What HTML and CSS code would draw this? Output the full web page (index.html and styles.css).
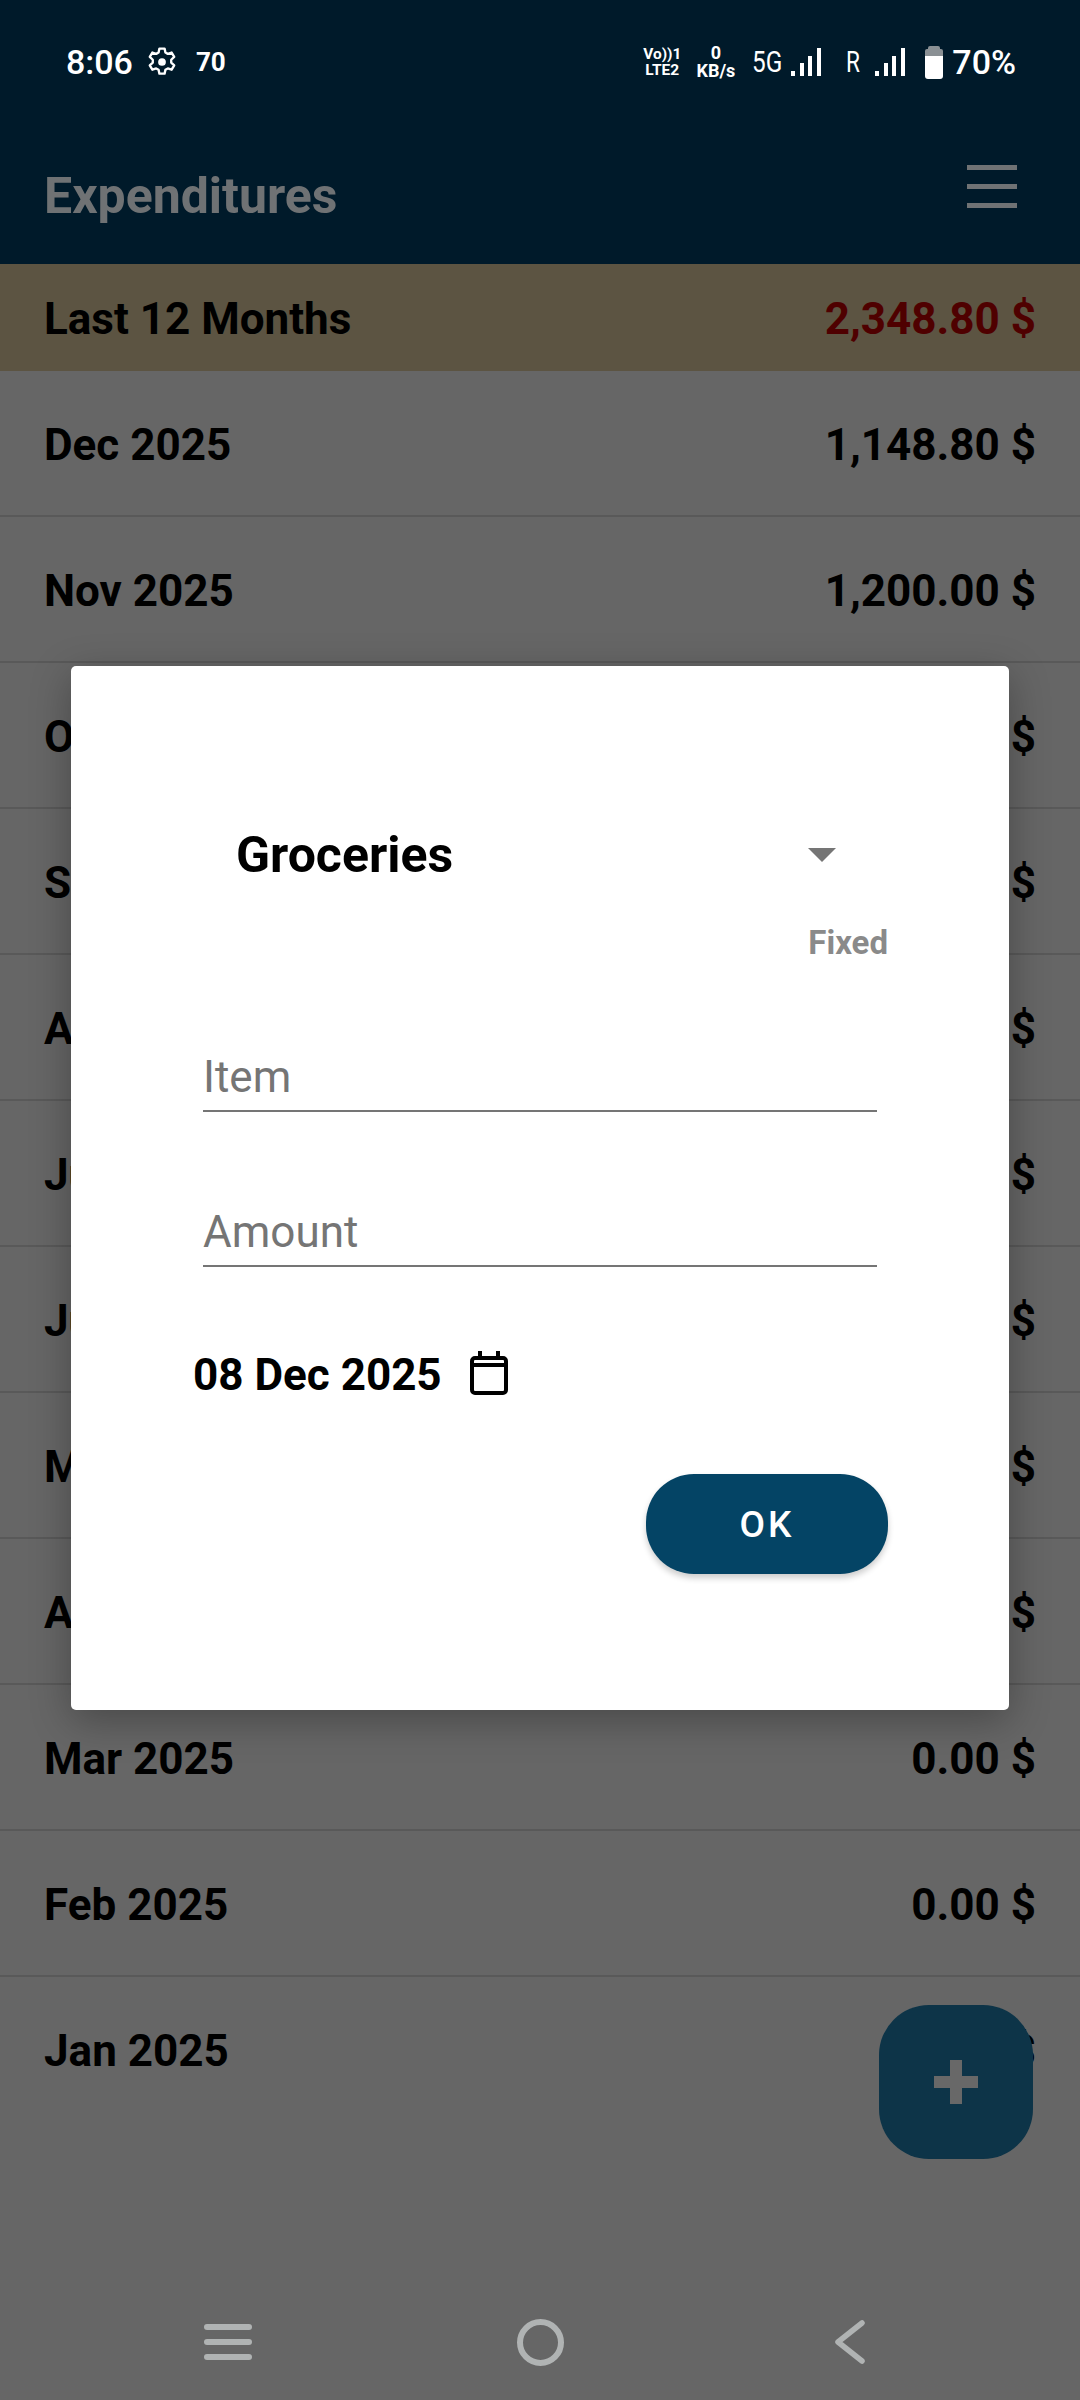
FILE: index.html
```html
<!DOCTYPE html>
<html lang="en">
<head>
	<meta charset="UTF-8">
	<meta name="viewport" content="width=device-width, initial-scale=1.0">
	<title>Expenditures</title>
	<link rel="stylesheet" href="styles.css">
</head>
<body>

<div id="app">
	<div class="status_bar">
		<div class="status_left">
			<span class="clock">8:06</span>
			<svg class="gear" viewBox="2 1 26 28" width="28" height="30" fill="none" stroke="#fff" stroke-width="2.2" stroke-linejoin="round">
				<path d="M12.6 2.5h4.8l.8 3.7 2.2 1.2 3.6-1.2 2.4 4.1-2.8 2.6v2.6l2.8 2.6-2.4 4.1-3.6-1.2-2.2 1.2-.8 3.7h-4.8l-.8-3.7-2.2-1.2-3.6 1.2-2.4-4.1 2.8-2.6v-2.6l-2.8-2.6 2.4-4.1 3.6 1.2 2.2-1.2z"/>
				<circle cx="15" cy="15" r="3.6" fill="#fff" stroke="none"/>
			</svg>
			<span class="temp">70</span>
		</div>
		<div class="status_right">
			<div class="volte"><span>Vo))1</span><span>LTE2</span></div>
			<div class="speed"><span>0</span><span>KB/s</span></div>
			<span class="net net_5g">5G</span>
			<svg class="bars" viewBox="0 0 30 28" width="30" height="28" fill="#fff">
				<rect x="0" y="23" width="4" height="5"/><rect x="9" y="15" width="4" height="13"/><rect x="17" y="8" width="4" height="20"/><rect x="26" y="0" width="4" height="28"/>
			</svg>
			<span class="net net_r">R</span>
			<svg class="bars" viewBox="0 0 30 28" width="30" height="28" fill="#fff">
				<rect x="0" y="23" width="4" height="5"/><rect x="9" y="15" width="4" height="13"/><rect x="17" y="8" width="4" height="20"/><rect x="26" y="0" width="4" height="28"/>
			</svg>
			<svg class="battery" viewBox="0 0 18 33" width="18" height="33">
				<path d="M5 0h8a2 2 0 0 1 2 2v1h1a2 2 0 0 1 2 2v5H0V5a2 2 0 0 1 2-2h1V2a2 2 0 0 1 2-2z" fill="#8a9094"/>
				<path d="M0 10h18v20a3 3 0 0 1-3 3H3a3 3 0 0 1-3-3z" fill="#fff"/>
			</svg>
			<span class="percent">70%</span>
		</div>
	</div>

	<div class="title_bar">
		<h1>Expenditures</h1>
		<div class="menu_btn"><i></i><i></i><i></i></div>
	</div>

	<div class="row total_row">
		<span>Last 12 Months</span>
		<span class="total_amount">2,348.80 $</span>
	</div>

	<div class="row"><span>Dec 2025</span><span>1,148.80 $</span></div>
	<div class="row"><span>Nov 2025</span><span>1,200.00 $</span></div>
	<div class="row"><span>Oct 2025</span><span>0.00 $</span></div>
	<div class="row"><span>Sep 2025</span><span>0.00 $</span></div>
	<div class="row"><span>Aug 2025</span><span>0.00 $</span></div>
	<div class="row"><span>Jul 2025</span><span>0.00 $</span></div>
	<div class="row"><span>Jun 2025</span><span>0.00 $</span></div>
	<div class="row"><span>May 2025</span><span>0.00 $</span></div>
	<div class="row"><span>Apr 2025</span><span>0.00 $</span></div>
	<div class="row"><span>Mar 2025</span><span>0.00 $</span></div>
	<div class="row"><span>Feb 2025</span><span>0.00 $</span></div>
	<div class="row row_last"><span>Jan 2025</span><span>0.00 $</span></div>

	<div class="fab"><span class="plus"></span></div>

	<div class="nav_bar">
		<div class="nav_lines"><i></i><i></i><i></i></div>
		<div class="nav_home"></div>
		<svg class="nav_back" viewBox="0 0 30 44" width="30" height="44" fill="none" stroke="#b0b3b3" stroke-width="5.5" stroke-linecap="round" stroke-linejoin="round">
			<path d="M27 3L3 22l24 19"/>
		</svg>
	</div>

	<div class="dialog">
		<div class="spinner_line">
			<span class="spinner_text">Groceries</span>
			<span class="spinner_arrow"></span>
		</div>
		<div class="fixed_line"><span>Fixed</span></div>
		<div class="field field_item">Item</div>
		<div class="field field_amount">Amount</div>
		<div class="date_line">
			<span>08 Dec 2025</span>
			<svg class="calendar" viewBox="0 0 38 44" width="38" height="44" fill="none" stroke="#000" stroke-width="4">
				<rect x="2" y="7" width="34" height="35" rx="3"/>
				<path d="M2 14h34M10 0v7M28 0v7"/>
			</svg>
		</div>
		<div class="ok_line"><button class="ok_btn">OK</button></div>
	</div>
</div>

</body>
</html>
```

FILE: styles.css
```css
html, body {
	margin: 0;
	padding: 0;
	background-color: #666666;
}

#app {
	position: relative;
	width: 1080px;
	height: 2400px;
	overflow: hidden;
	background-color: #666666;
	font-family: Roboto, "Noto Sans", sans-serif;
	color: #000;
}

.status_bar {
	display: flex;
	justify-content: space-between;
	align-items: center;
	height: 124px;
	padding: 0 64px 0 66px;
	box-sizing: border-box;
	background-color: #001a2a;
	color: #fff;
}

.status_left {
	display: flex;
	align-items: center;
}

.clock {
	font-size: 34px;
	font-weight: 500;
}

.gear {
	margin-left: 15px;
}

.temp {
	margin-left: 20px;
	font-size: 26px;
	font-weight: 700;
}

.status_right {
	display: flex;
	align-items: center;
}

.volte, .speed {
	display: flex;
	flex-direction: column;
	align-items: center;
	font-weight: 700;
}

.volte {
	font-size: 15.5px;
	line-height: 16px;
}

.speed {
	margin-left: 15px;
	font-size: 18px;
	line-height: 18px;
}

.net {
	font-size: 29px;
	transform-origin: left center;
}

.net_5g {
	margin-left: 17px;
	width: 27px;
	transform: scaleX(0.84);
}

.net_r {
	margin-left: 25px;
	width: 14px;
	transform: scaleX(0.78);
}

.status_right .bars {
	margin-left: 12px;
}

.status_right .net_r + .bars {
	margin-left: 15px;
}

.battery {
	margin-left: 20px;
}

.percent {
	margin-left: 9px;
	font-size: 34px;
	font-weight: 500;
}

.title_bar {
	display: flex;
	justify-content: space-between;
	align-items: center;
	height: 140px;
	padding: 0 63px 0 44px;
	background-color: #001a2a;
}

.title_bar h1 {
	margin: 4px 0 0;
	font-size: 50px;
	font-weight: 700;
	color: #6f7274;
}

.menu_btn {
	display: flex;
	flex-direction: column;
	gap: 14px;
	margin-bottom: 16px;
}

.menu_btn i {
	display: block;
	width: 50px;
	height: 5px;
	background-color: #6f7274;
}

.row {
	display: flex;
	justify-content: space-between;
	align-items: center;
	height: 144px;
	padding: 0 44px 0 44px;
	border-bottom: 2px solid #595959;
	font-size: 44px;
	font-weight: 700;
}

.row span {
	padding-top: 3px;
}

.row_last {
	border-bottom: none;
}

.total_row {
	height: 107px;
	border-bottom: none;
	background-color: #5c5442;
}

.total_amount {
	color: #4f0000;
}

.fab {
	position: absolute;
	left: 879px;
	top: 2005px;
	width: 154px;
	height: 154px;
	border-radius: 50px;
	background-color: #0d3448;
	display: flex;
	justify-content: center;
	align-items: center;
}

.plus {
	position: relative;
	display: block;
	width: 44px;
	height: 12px;
	background-color: #686868;
}

.plus::after {
	content: "";
	position: absolute;
	left: 16px;
	top: -16px;
	width: 12px;
	height: 44px;
	background-color: #686868;
}

.nav_bar {
	position: absolute;
	left: 0;
	right: 0;
	bottom: 0;
	height: 116px;
	display: grid;
	grid-template-columns: 204px 48px 265px 47px 271px 30px;
	align-items: center;
}

.nav_lines {
	grid-column: 2;
	display: flex;
	flex-direction: column;
	gap: 9px;
}

.nav_lines i {
	display: block;
	height: 6px;
	border-radius: 3px;
	background-color: #b0b3b3;
}

.nav_home {
	grid-column: 4;
	width: 47px;
	height: 47px;
	box-sizing: border-box;
	border: 6px solid #b0b3b3;
	border-radius: 50%;
}

.nav_back {
	grid-column: 6;
}

.dialog {
	position: absolute;
	left: 71px;
	top: 666px;
	width: 938px;
	height: 1044px;
	box-sizing: border-box;
	padding: 154px 121px 0 122px;
	background-color: #fff;
	border-radius: 5px;
	box-shadow: 0 10px 40px rgba(0, 0, 0, 0.3);
}

.spinner_line {
	display: flex;
	justify-content: space-between;
	align-items: center;
	height: 70px;
	padding: 0 52px 0 43px;
}

.spinner_text {
	font-size: 50px;
	font-weight: 700;
}

.spinner_arrow {
	width: 0;
	height: 0;
	border-left: 14px solid transparent;
	border-right: 14px solid transparent;
	border-top: 14px solid #757575;
}

.fixed_line {
	display: flex;
	justify-content: flex-end;
	margin-top: 35px;
	font-size: 33px;
	font-weight: 700;
	color: #8a8a8a;
	line-height: 36px;
}

.field {
	width: 674px;
	margin-left: 10px;
	border-bottom: 2px solid #757575;
	font-size: 44px;
	font-weight: 400;
	color: #757575;
	line-height: 50px;
	box-sizing: border-box;
	padding-bottom: 8px;
}

.field_item {
	margin-top: 91px;
}

.field_amount {
	margin-top: 95px;
}

.date_line {
	display: flex;
	align-items: center;
	gap: 28px;
	margin-top: 82px;
	font-size: 44px;
	font-weight: 700;
}

.calendar {
	margin-top: -4px;
}

.ok_line {
	display: flex;
	justify-content: flex-end;
	margin-top: 73px;
}

.ok_btn {
	width: 242px;
	height: 100px;
	border: none;
	border-radius: 48px;
	background-color: #044465;
	color: #fff;
	font-family: Roboto, sans-serif;
	font-size: 37px;
	font-weight: 500;
	letter-spacing: 3px;
	box-shadow: 0 4px 6px rgba(0, 0, 0, 0.2);
}
```
